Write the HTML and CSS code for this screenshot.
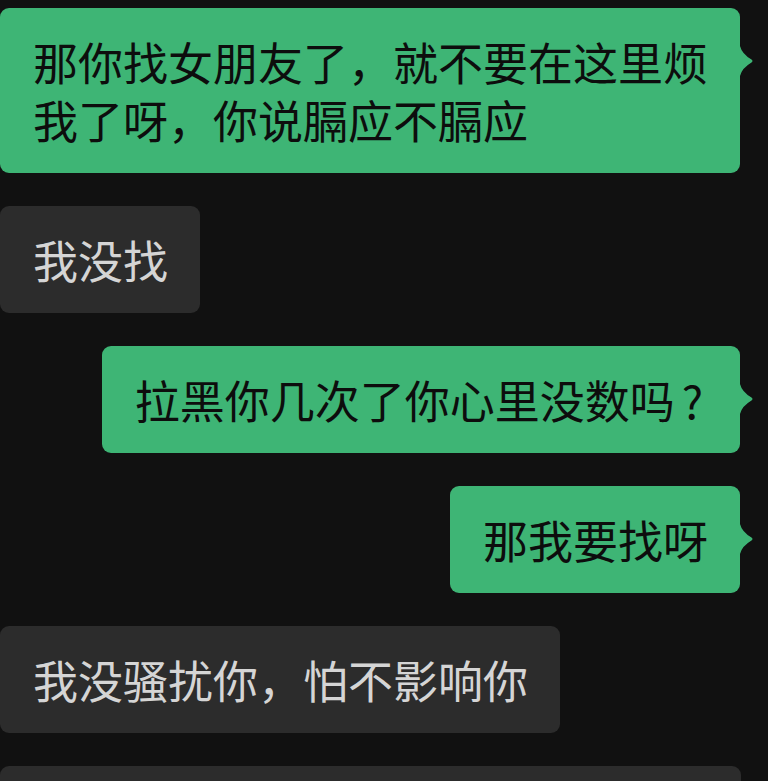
FILE: index.html
```html
<!DOCTYPE html>
<html lang="zh-CN">
<head>
  <meta charset="UTF-8" />
  <meta name="viewport" content="width=device-width, initial-scale=1.0" />
  <title>聊天记录</title>
  <link rel="stylesheet" href="styles.css">
</head>
<body>
  <div class="chat">
    <div class="msg me">那你找女朋友了，就不要在这里烦我了呀，你说膈应不膈应</div>
    <div class="msg other">我没找</div>
    <div class="msg me">拉黑你几次了你心里没数吗<span class="qm">?</span></div>
    <div class="msg me">那我要找呀</div>
    <div class="msg other">我没骚扰你，怕不影响你</div>
    <!-- next message, only its top edge is on screen -->
    <div class="msg other full"></div>
  </div>
</body>
</html>
```

FILE: styles.css
```css
body { margin: 0; background: #111111; font-family: "Noto Sans CJK SC", "Noto Sans", sans-serif; overflow: hidden; }
.chat { display: flex; flex-direction: column; gap: 33px; padding-top: 8px; height: 781px; box-sizing: border-box; overflow: hidden; }
.msg { position: relative; flex-shrink: 0; max-width: 741px; box-sizing: border-box; padding: 24.5px 32px 24.5px 33px; font-size: 45px; line-height: 58px; border-radius: 9px; word-break: break-all; }
.other { align-self: flex-start; background: #2c2c2c; color: #d5d5d5; }
.me { align-self: flex-end; margin-right: 28px; background: #3eb575; color: #0d0d0d; }
.me::after { content: ""; position: absolute; left: 100%; top: 38px; width: 13px; height: 30px; background: #3eb575; clip-path: path('M0 0 Q2 8 11.5 13.5 Q13.5 15 11.5 16.5 Q2 22 0 30 Z'); }
.qm { margin-left: 7px; margin-right: 5px; }
.full { width: 742px; min-height: 107px; }
```
